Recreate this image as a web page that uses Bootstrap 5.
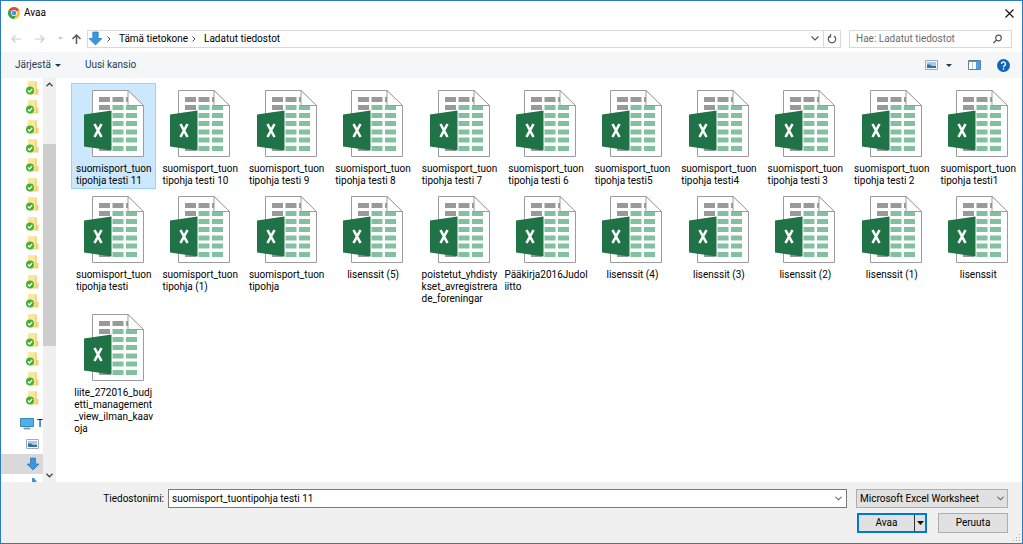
<!DOCTYPE html>
<html lang="fi">
<head>
<meta charset="utf-8">
<meta name="viewport" content="width=device-width, initial-scale=1">
<title>Avaa</title>
<link href="https://cdn.jsdelivr.net/npm/bootstrap@5.3.0/dist/css/bootstrap.min.css" rel="stylesheet">
<style>
  body { font: 10px/12px Roboto, "Open Sans", sans-serif; color: #000; background: #fff; }
  button, input, select { font: inherit; color: inherit; }
  svg { display: block; flex: none; }
  .dialog { min-height: 100vh; border: 1px solid #2b7cc3; }
  .plain { border: 0; padding: 0; background: none; }
  .titlebar { height: 24px; padding: 0 8px 0 7px; }
  .address-row { height: 27px; padding: 0 10px 0 9px; }
  .field-box { height: 18px; border: 1px solid #d9d9d9; }
  .crumb { color: #000; text-decoration: none; }
  .refresh { width: 17px; height: 16px; border-left: 1px solid #d9d9d9; }
  .search { width: 163px; }
  .search input { min-width: 0; border: 0; outline: 0; padding: 0 0 0 6px; background: none; }
  .search input::placeholder { color: #6d6d6d; opacity: 1; }
  .commands { height: 26px; background: #f5f6f7; color: #1e395b; padding: 0 12px 0 14px; }
  .tree { width: 42px; min-height: 404px; }
  .tree-body { inset: 0; }
  .quick { display: grid; grid-auto-rows: 1fr; height: 330px; }
  .quick > li, .places > li { padding-left: 25px; display: flex; align-items: center; }
  .places { margin-top: 6px; }
  .places > li { height: 20px; }
  .places > .top { padding-left: 19px; gap: 3px; }
  .places > .current { background: #d9d9d9; }
  .rail { width: 13px; background: #f0f0f0; }
  .rail-thumb { top: 66px; height: 202px; background: #cdcdcd; }
  .files { display: grid; grid-template-columns: repeat(11, minmax(0, 1fr)); align-content: start; padding: 5px 0 0 15px; }
  .file { margin-right: 1px; padding: 6px 0 1px; border: 1px solid transparent; min-height: 106px; color: #000; text-decoration: none; display: flex; flex-direction: column; align-items: center; white-space: pre; }
  .file svg { margin-bottom: 5px; }
  .file.chosen { background: #cce8ff; border-color: #99d1ff; }
  .footer-bar { background: #f0f0f0; padding: 7px 14px 10px 0; min-height: 61px; }
  .name-label { width: 167px; text-align: right; }
  .control { height: 19px; }
  .name-box { border: 1px solid #7a7a7a; background: #fff; }
  .name-box input { border: 0; outline: 0; padding: 0 0 0 3px; min-width: 0; background: none; }
  .type-box { width: 152px; }
  .type-box select { appearance: none; width: 100%; height: 19px; border: 1px solid #adadad; border-radius: 0; background: #e1e1e1; padding: 0 16px 0 3px; }
  .type-box svg { right: 4px; top: 7px; }
  .push { width: 70px; height: 20px; background: #e1e1e1; border: 1px solid #adadad; padding: 0; }
  .split { width: 70px; height: 20px; background: #e1e1e1; border: 2px solid #0078d7; }
  .split .more { width: 11px; border-left: 1px solid #333; }
  .push-row { gap: 11px; margin-top: 5px; }
  .box-row { gap: 9px; }
  .grip { right: 1px; bottom: 1px; }
</style>
</head>
<body>
<svg width="0" height="0" class="position-absolute" aria-hidden="true">
  <symbol id="sheet" viewBox="0 0 60 68">
    <path d="M8.500.5H44L59.500 15.500V66.500H8.500Z" fill="#fff" stroke="#9c9c9c"/>
    <g fill="#999"><path d="M15 7h11v5H15zM28.500 7h11v5h-11zM42 7h2v5h-2zM15 15h11v5H15zM15 56h11v5H15z"/></g>
    <path fill="#83c0a0" d="M28.500 15h11v5h-11zM42 15h11v5H42zM28.500 23h11v5h-11zM42 23h11v5H42zM28.500 31h11v5h-11zM42 31h11v5H42zM28.500 39.500h11v5h-11zM42 39.500h11v5H42zM28.500 47.500h11v5h-11zM42 47.500h11v5H42zM28.500 56h11v5h-11zM42 56h11v5H42z"/>
    <path d="M44 .5V15.500H59.500Z" fill="#fff" stroke="#9c9c9c"/>
    <path d="M0 24.500 27.500 20.500V60.500L0 56.500Z" fill="#1f7346"/>
    <path d="M10.500 34 17.500 47M17.500 34 10.500 47" stroke="#fff" stroke-width="2.600"/>
  </symbol>
  <symbol id="folder" viewBox="0 0 14 14">
    <path d="M2 .5h8.500V8H12.500v5.500H4L2 12z" fill="#f5d47a"/><path d="M2 .5h8V12H2z" fill="#fde69c"/><path d="M10 .5v12" stroke="#e8c25a" stroke-width=".8"/>
    <circle cx="4" cy="9.500" r="4" fill="#3fb32d"/><path d="M2 9.500 3.500 11 6.200 8" fill="none" stroke="#fff" stroke-width="1.300"/>
  </symbol>
  <symbol id="down" viewBox="0 0 14 14"><path d="M4.500 1h5v6H13L7 13 1 7h3.500z" fill="#3a96e0" stroke="#2277c2" stroke-width=".7"/></symbol>
  <symbol id="chev" viewBox="0 0 8 5"><path d="M.5.5 4 4 7.500.5" fill="none" stroke="#555" stroke-width="1.200"/></symbol>
  <symbol id="photo" viewBox="0 0 13 10"><path d="M.5.5h12v9H.5z" fill="#f4f8fb" stroke="#9fabb8"/><path d="M2 2h9v6H2z" fill="#a5cbea"/><path d="M2 4.500h3l2 1.500h4v2H2z" fill="#3a6d9c"/></symbol>
</svg>

<main class="dialog d-flex flex-column">
  <header>
    <div class="titlebar d-flex align-items-center">
      <svg width="12" height="12" viewBox="0 0 12 12"><circle cx="6" cy="6" r="6" fill="#f6c629"/><path d="M6 6 .8 3A6 6 0 0 1 11.200 3Z" fill="#dc4a3d"/><path d="M6 6 .8 3A6 6 0 0 0 6 12L8.500 7.500Z" fill="#2fa35a"/><circle cx="6" cy="6" r="2.900" fill="#fff"/><circle cx="6" cy="6" r="2.200" fill="#4b86e8"/></svg>
      <span class="ms-1">Avaa</span>
      <button class="plain ms-auto" aria-label="Sulje"><svg width="9" height="9" viewBox="0 0 9 9"><path d="M.5.5l8 8M8.500.5l-8 8" stroke="#111" stroke-width="1.100"/></svg></button>
    </div>
    <div class="address-row d-flex align-items-center">
      <button class="plain" aria-label="Takaisin"><svg width="12" height="10" viewBox="0 0 12 10"><path d="M11 5H2M5.500 1.500 2 5l3.500 3.500" fill="none" stroke="#ccc" stroke-width="1.200"/></svg></button>
      <button class="plain ms-2 ps-1" aria-label="Eteenpäin"><svg width="12" height="10" viewBox="0 0 12 10"><path d="M1 5h9M6.500 1.500 10 5 6.500 8.500" fill="none" stroke="#ccc" stroke-width="1.200"/></svg></button>
      <button class="plain ms-2 ps-1" aria-label="Historia"><svg width="5" height="3" viewBox="0 0 5 3"><path d="M0 0h5L2.500 3z" fill="#ccc"/></svg></button>
      <button class="plain ms-2" aria-label="Ylös"><svg width="12" height="12" viewBox="0 0 12 12"><path d="M5.500 11V2M1.500 6l4-4 4 4" fill="none" stroke="#555" stroke-width="1.500"/></svg></button>
      <nav class="field-box d-flex align-items-center flex-grow-1 ms-1" aria-label="Polku">
        <svg width="15" height="15"><use href="#down"/></svg>
        <svg class="ms-1" width="4" height="6" viewBox="0 0 4 6"><path d="M.5.5 3 3 .5 5.500" fill="none" stroke="#444"/></svg>
        <a class="crumb ms-2" href="#">Tämä tietokone</a>
        <svg class="ms-1" width="4" height="6" viewBox="0 0 4 6"><path d="M.5.5 3 3 .5 5.500" fill="none" stroke="#444"/></svg>
        <a class="crumb ms-2" href="#">Ladatut tiedostot</a>
        <button class="plain ms-auto me-1" aria-label="Edelliset"><svg width="8" height="5"><use href="#chev"/></svg></button>
        <button class="plain refresh d-flex align-items-center justify-content-center" aria-label="Päivitä"><svg width="10" height="10" viewBox="0 0 10 10"><path d="M3 2A3.700 3.700 0 1 0 7 2M3.500 0V3H.8" fill="none" stroke="#555" stroke-width="1.200"/></svg></button>
      </nav>
      <div class="field-box search d-flex align-items-center ms-2">
        <input class="flex-grow-1" type="search" aria-label="Hae" placeholder="Hae: Ladatut tiedostot">
        <svg class="me-1 pe-1" width="14" height="10" viewBox="0 0 10 9"><circle cx="5.500" cy="3.500" r="2.800" fill="none" stroke="#555" stroke-width="1.200"/><path d="M3.500 5.500.5 8.500" stroke="#555" stroke-width="1.300"/></svg>
      </div>
    </div>
    <div class="commands d-flex align-items-center">
      <button class="plain d-flex align-items-center">Järjestä<svg class="ms-1" width="6" height="3" viewBox="0 0 6 3"><path d="M0 0h6L3 3z" fill="#1e395b"/></svg></button>
      <button class="plain ms-4">Uusi kansio</button>
      <button class="plain ms-auto" aria-label="Näkymä"><svg width="13" height="10"><use href="#photo"/></svg></button>
      <button class="plain ms-2" aria-label="Lisää näkymiä"><svg width="6" height="3" viewBox="0 0 6 3"><path d="M0 0h6L3 3z" fill="#1e395b"/></svg></button>
      <button class="plain ms-3" aria-label="Esikatselu"><svg width="13" height="10" viewBox="0 0 13 10"><path d="M.5.5h12v9H.5z" fill="#fff" stroke="#5f7f9f"/><path d="M8 1h4v8H8z" fill="#4aa0e6"/><path d="M1 1.500h11" stroke="#6f8faf"/><path d="M4.500 2v7" stroke="#c5d0da"/></svg></button>
      <button class="plain ms-3" aria-label="Ohje"><svg width="13" height="13" viewBox="0 0 13 13"><circle cx="6.500" cy="6.500" r="6.500" fill="#0f66b9"/><path d="M4.500 5a2 2 0 1 1 3 1.600Q6.500 7.200 6.500 8.300M6.500 9.300v1.400" fill="none" stroke="#fff" stroke-width="1.400"/></svg></button>
    </div>
  </header>

  <div class="d-flex flex-grow-1">
    <aside class="tree position-relative flex-shrink-0">
      <div class="tree-body position-absolute overflow-hidden">
        <ul class="quick list-unstyled mb-0" id="quick"></ul>
        <ul class="places list-unstyled mb-0">
          <li class="top"><svg width="14" height="12" viewBox="0 0 14 12"><path d="M.5.500h13v8H.5z" fill="#4db2ea" stroke="#3d87b5"/><path d="M4 11h6v-1H4z" fill="#8ba0ad" stroke="#8ba0ad"/></svg>T</li>
          <li><svg width="13" height="10"><use href="#photo"/></svg></li>
          <li class="current"><svg width="14" height="14"><use href="#down"/></svg></li>
          <li><svg class="ms-1" width="8" height="12" viewBox="0 0 8 12"><path d="M2 0h2l3 4v3L4 5v7H2z" fill="#2e96e6"/></svg></li>
        </ul>
      </div>
    </aside>
    <div class="rail position-relative d-flex flex-column justify-content-between align-items-center py-1 flex-shrink-0" aria-hidden="true">
      <svg width="7" height="5" viewBox="0 0 8 5"><path d="M.5 4.500 4 1l3.500 3.500" fill="none" stroke="#444" stroke-width="1.500"/></svg>
      <div class="rail-thumb position-absolute w-100"></div>
      <svg width="7" height="5" viewBox="0 0 8 5"><path d="M.5.5 4 4 7.500.5" fill="none" stroke="#444" stroke-width="1.500"/></svg>
    </div>
    <div class="files flex-grow-1" id="files"></div>
  </div>

  <form class="footer-bar position-relative" onsubmit="return false">
    <div class="box-row d-flex align-items-center">
      <div class="d-flex align-items-center flex-grow-1">
        <label class="name-label pe-1" for="fname">Tiedostonimi:</label>
        <div class="name-box control d-flex align-items-center flex-grow-1">
          <input class="flex-grow-1" id="fname" type="text" value="suomisport_tuontipohja testi 11">
          <svg class="me-1" width="7" height="5"><use href="#chev"/></svg>
        </div>
      </div>
      <div class="type-box position-relative">
        <select aria-label="Tiedostotyyppi"><option>Microsoft Excel Worksheet</option></select>
        <svg class="position-absolute pe-none" width="7" height="5"><use href="#chev"/></svg>
      </div>
    </div>
    <div class="push-row d-flex justify-content-end">
      <div class="split d-flex">
        <button class="plain flex-grow-1" type="submit">Avaa</button>
        <button class="plain more d-flex align-items-center justify-content-center" type="button" aria-label="Lisää"><svg width="7" height="4" viewBox="0 0 7 4"><path d="M0 0h7L3.500 4z" fill="#111"/></svg></button>
      </div>
      <button class="push" type="button">Peruuta</button>
    </div>
    <svg class="grip position-absolute" width="8" height="8" viewBox="0 0 8 8"><path d="M6 0h1v1H6zM3 3h1v1H3zM6 3h1v1H6zM0 6h1v1H0zM3 6h1v1H3zM6 6h1v1H6z" fill="#aaa"/></svg>
  </form>
</main>
<script src="https://cdn.jsdelivr.net/npm/bootstrap@5.3.0/dist/js/bootstrap.bundle.min.js"></script>
<script>
  const names = [
    ...['testi 11', 'testi 10', 'testi 9', 'testi 8', 'testi 7', 'testi 6', 'testi5', 'testi4', 'testi 3', 'testi 2', 'testi1', 'testi', '(1)'].map(s => 'suomisport_tuon\ntipohja ' + s),
    'suomisport_tuon\ntipohja', 'lisenssit (5)', 'poistetut_yhdisty\nkset_avregistrera\nde_foreningar', 'Pääkirja2016Judol\niitto',
    'lisenssit (4)', 'lisenssit (3)', 'lisenssit (2)', 'lisenssit (1)', 'lisenssit',
    'liite_272016_budj\netti_management\n_view_ilman_kaav\noja'
  ];
  document.getElementById('files').innerHTML = names.map((n, i) =>
    `<a href="#" class="file${i ? '' : ' chosen'}"><svg width="60" height="68"><use href="#sheet"/></svg><span>${n}</span></a>`).join('');
  document.getElementById('quick').innerHTML = '<li><svg width="14" height="14"><use href="#folder"/></svg></li>'.repeat(17);
</script>
</body>
</html>
